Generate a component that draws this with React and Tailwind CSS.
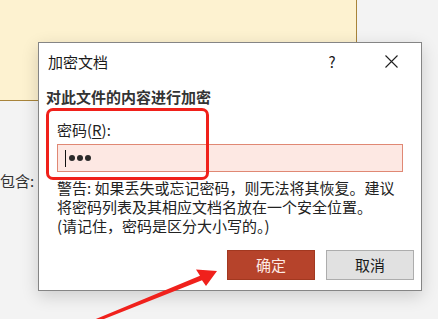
import React from 'react';

const cjk = { fontFamily: '"Microsoft YaHei", "Noto Sans CJK SC", "Noto Sans", sans-serif' };

function CloseIcon() {
  return (
    <svg width="13" height="13" viewBox="0 0 13 13" fill="none" stroke="#1f1f1f" strokeWidth="1.1">
      <path d="M0.5 0.5 L12.5 12.5 M12.5 0.5 L0.5 12.5" />
    </svg>
  );
}

function Arrow() {
  // red annotation arrow pointing at the OK button
  return (
    <svg className="absolute left-0 top-0 pointer-events-none" width="438" height="319" viewBox="0 0 438 319">
      <polygon
        points="95.6,319.1 200,275.7 196,269.5 217,271 206,286 202,280.3 96.4,322"
        fill="#f0211c"
      />
    </svg>
  );
}

export default function App() {
  return (
    <div className="relative w-[438px] h-[319px] overflow-hidden bg-[#f3f3f3] text-[#222]" style={cjk}>
      {/* background document */}
      <div className="w-[357px] h-[101px] bg-[#fdf2d0] border-r border-b border-[#a8843a]" />
      <p className="mt-[70px] text-[15px] leading-[20px] text-[#333]">包含:</p>

      {/* dialog */}
      <div className="absolute left-[38px] top-[42px] w-[384px] h-[249px] box-border bg-white border border-[#858585] shadow-[0_5px_16px_rgba(0,0,0,0.16)] flex flex-col">
        <div className="h-[37px] flex items-center pl-[9px] shrink-0">
          <span className="text-[15px] leading-[20px] text-[#1a1a1a] flex-1">加密文档</span>
          <span className="text-[15px] leading-[20px] text-[#1a1a1a] w-[14px] text-center mr-[46px]">?</span>
          <span className="mr-[23px] flex items-center"><CloseIcon /></span>
        </div>

        <div className="mt-[7px] pl-[7px] text-[15px] leading-[20px] font-bold text-[#333]">对此文件的内容进行加密</div>

        <div className="pl-[18px] pr-[18px] mt-[13px]">
          <div className="text-[15px] leading-[20px] text-[#222]">
            密码(<span className="underline underline-offset-2">R</span>):
          </div>
          <div className="mt-[4px] h-[28px] box-border bg-[#fde8e3] border border-[#e08874] flex items-center pl-[7px] gap-[2px]">
            <span className="w-[1px] h-[17px] bg-[#111] mr-[1px]" />
            <span className="w-[6px] h-[6px] rounded-full bg-[#2a2a2a]" />
            <span className="w-[6px] h-[6px] rounded-full bg-[#2a2a2a]" />
            <span className="w-[6px] h-[6px] rounded-full bg-[#2a2a2a]" />
          </div>
          <div className="mt-[6px] text-[15px] leading-[19px] text-[#222]">
            <div>警告: 如果丢失或忘记密码，则无法将其恢复。建议</div>
            <div>将密码列表及其相应文档名放在一个安全位置。</div>
            <div>(请记住，密码是区分大小写的。)</div>
          </div>
        </div>

        <div className="mt-auto mb-[10px] mr-[7px] flex justify-end gap-[11px]">
          <button className="w-[88px] h-[30px] box-border bg-[#b6432b] border border-[#a23820] text-[#fdebe6] text-[15px] leading-[20px]">确定</button>
          <button className="w-[88px] h-[30px] box-border bg-[#e1e1e1] border border-[#adadad] text-[#1a1a1a] text-[15px] leading-[20px]">取消</button>
        </div>
      </div>

      {/* annotation box around password label */}
      <div className="absolute left-[46px] top-[108px] w-[163px] h-[72px] box-border border-[3px] border-[#f0201a] rounded-[7px]" />

      <Arrow />
    </div>
  );
}
